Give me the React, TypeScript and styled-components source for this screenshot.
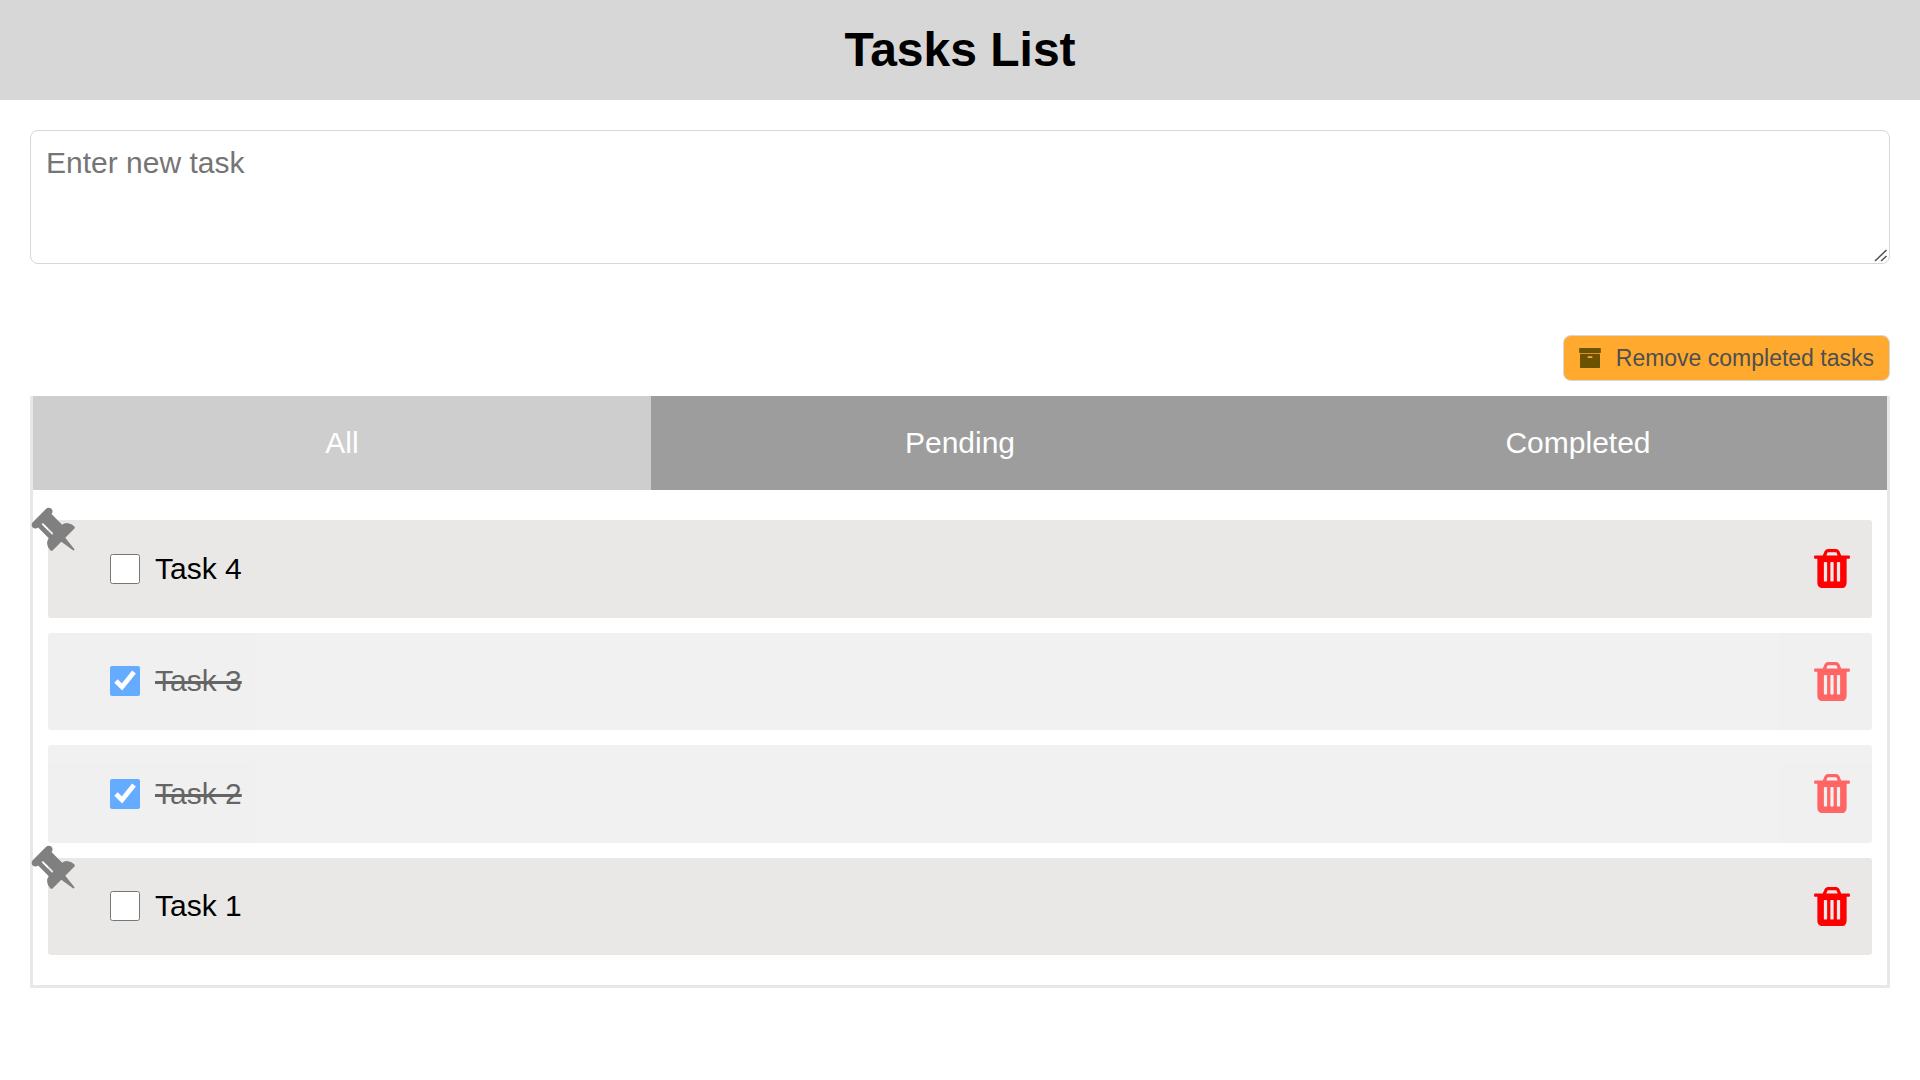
import React, { useState } from "react";
import styled, { createGlobalStyle } from "styled-components";

const GlobalStyle = createGlobalStyle`
  *, *::before, *::after { box-sizing: border-box; }
  body {
    margin: 0;
    background: #fff;
    color: #000;
    font-family: Arial, "Liberation Sans", sans-serif;
    font-size: 30px;
  }
  button, textarea { font-family: inherit; }
`;

const Header = styled.header`
  padding: 20px;
  background: #d7d7d7;
  text-align: center;
`;

const Title = styled.h1`
  margin: 0;
  font-size: 48px;
  line-height: 60px;
`;

const Main = styled.main`
  display: flex;
  flex-direction: column;
  padding: 30px;
`;

const TaskInput = styled.textarea`
  display: block;
  width: 100%;
  padding: 15px;
  border: 1px solid #d7d7d7;
  border-radius: 8px;
  background: #fff;
  font-size: 30px;
  line-height: 34px;
  resize: vertical;

  &::placeholder { color: #757575; }

  &::-webkit-resizer {
    background: url("data:image/svg+xml,%3Csvg xmlns='http://www.w3.org/2000/svg' width='15' height='15'%3E%3Cpath d='M1 13L12.500 2M7 13L12.500 8' stroke='%23505050' stroke-width='1.500' fill='none'/%3E%3C/svg%3E") no-repeat;
  }
`;

const Toolbar = styled.div`
  display: flex;
  justify-content: flex-end;
  margin: 71px 0 15px;
`;

const RemoveButton = styled.button`
  display: flex;
  align-items: center;
  gap: 15px;
  padding: 7px 15px;
  border: 1px solid #d7d7d7;
  border-radius: 8px;
  background: #ffaa2e;
  color: #4f4f4f;
  font-size: 23px;
  line-height: 30px;
  cursor: pointer;

  svg { fill: #6b5200; }
`;

const Panel = styled.section`
  border: 3px solid #e8e8e8;
  border-top: 0;
`;

const Tabs = styled.div`
  display: grid;
  grid-template-columns: repeat(3, 1fr);
`;

const Tab = styled.button<{ $active: boolean }>`
  padding: 30px;
  border: 0;
  background: ${(p) => (p.$active ? "#cecece" : "#9d9d9d")};
  color: #fff;
  font-size: 30px;
  line-height: 34px;
  cursor: pointer;
`;

const TaskList = styled.ul`
  display: flex;
  flex-direction: column;
  gap: 15px;
  margin: 0;
  padding: 30px 15px;
  list-style: none;
`;

const TaskRow = styled.li<{ $done: boolean }>`
  position: relative;
  display: flex;
  align-items: center;
  justify-content: space-between;
  padding: 15px 22px 15px 62px;
  border-radius: 3px;
  background: ${(p) => (p.$done ? "#e7e7e7" : "#e9e8e6")};
  opacity: ${(p) => (p.$done ? 0.6 : 1)};
`;

const TaskLabel = styled.label<{ $done: boolean }>`
  display: flex;
  align-items: center;
  gap: 15px;
  line-height: 34px;
  text-decoration: ${(p) => (p.$done ? "line-through" : "none")};
`;

const Check = styled.input`
  width: 30px;
  height: 30px;
  margin: 0;
`;

const DeleteButton = styled.button`
  display: flex;
  align-items: center;
  height: 1.5em;
  padding: 0;
  border: 0;
  background: none;
  font-size: 45px;
  cursor: pointer;

  svg { fill: #f00; }
`;

const Pin = styled.svg`
  position: absolute;
  top: -15px;
  left: -19px;
  width: 53px;
  height: 53px;
  fill: #808080;
  transform: rotate(-45deg);
`;

const TrashIcon = () => (
  <svg width="36" height="39" viewBox="192 128 1408 1536" aria-hidden="true">
    <path d="M704 1376v-704q0-14-9-23t-23-9h-64q-14 0-23 9t-9 23v704q0 14 9 23t23 9h64q14 0 23-9t9-23zm256 0v-704q0-14-9-23t-23-9h-64q-14 0-23 9t-9 23v704q0 14 9 23t23 9h64q14 0 23-9t9-23zm256 0v-704q0-14-9-23t-23-9h-64q-14 0-23 9t-9 23v704q0 14 9 23t23 9h64q14 0 23-9t9-23zm-544-992h448l-48-117q-7-9-17-11h-317q-10 2-17 11zm928 32v64q0 14-9 23t-23 9h-96v948q0 83-47 143.500t-113 60.500h-832q-66 0-113-58.500t-47-141.500v-952h-96q-14 0-23-9t-9-23v-64q0-14 9-23t23-9h309l70-167q15-37 54-63t79-26h320q40 0 79 26t54 63l70 167h309q14 0 23 9t9 23z" />
  </svg>
);

const ArchiveIcon = () => (
  <svg width="22" height="20" viewBox="64 128 1664 1536" aria-hidden="true">
    <path d="M1088 832q0-26-19-45t-45-19h-256q-26 0-45 19t-19 45 19 45 45 19h256q26 0 45-19t19-45zm576-192v960q0 26-19 45t-45 19h-1408q-26 0-45-19t-19-45v-960q0-26 19-45t45-19h1408q26 0 45 19t19 45zm64-448v256q0 26-19 45t-45 19h-1536q-26 0-45-19t-19-45v-256q0-26 19-45t45-19h1536q26 0 45 19t19 45z" />
  </svg>
);

const PinIcon = () => (
  <Pin viewBox="0 0 1792 1792" aria-hidden="true">
    <path d="M800 864v-448q0-14-9-23t-23-9-23 9-9 23v448q0 14 9 23t23 9 23-9 9-23zm672 352q0 26-19 45t-45 19h-429l-51 483q-2 12-10.500 20.500t-20.500 8.500h-1q-27 0-32-27l-76-485h-404q-26 0-45-19t-19-45q0-123 78.500-221.500t177.500-98.500v-512q-52 0-90-38t-38-90 38-90 90-38h640q52 0 90 38t38 90-38 90-90 38v512q99 0 177.500 98.500t78.500 221.500z" />
  </Pin>
);

type Filter = "All" | "Pending" | "Completed";
interface Task {
  id: number;
  text: string;
  done: boolean;
}

const FILTERS: Filter[] = ["All", "Pending", "Completed"];
const INITIAL: Task[] = [
  { id: 4, text: "Task 4", done: false },
  { id: 3, text: "Task 3", done: true },
  { id: 2, text: "Task 2", done: true },
  { id: 1, text: "Task 1", done: false },
];

export default function App() {
  const [tasks, setTasks] = useState(INITIAL);
  const [filter, setFilter] = useState<Filter>("All");

  const visible = tasks.filter(
    (t) => filter === "All" || t.done === (filter === "Completed")
  );

  const toggle = (id: number) =>
    setTasks(tasks.map((t) => (t.id === id ? { ...t, done: !t.done } : t)));

  const addTask = (e: React.KeyboardEvent<HTMLTextAreaElement>) => {
    const text = e.currentTarget.value.trim();
    if (e.key !== "Enter" || !text) return;
    e.preventDefault();
    setTasks([{ id: Date.now(), text, done: false }, ...tasks]);
    e.currentTarget.value = "";
  };

  return (
    <>
      <GlobalStyle />
      <Header>
        <Title>Tasks List</Title>
      </Header>
      <Main>
        <TaskInput
          rows={3}
          placeholder="Enter new task"
          aria-label="Enter new task"
          onKeyDown={addTask}
        />
        <Toolbar>
          <RemoveButton
            type="button"
            onClick={() => setTasks(tasks.filter((t) => !t.done))}
          >
            <ArchiveIcon />
            Remove completed tasks
          </RemoveButton>
        </Toolbar>
        <Panel>
          <Tabs>
            {FILTERS.map((f) => (
              <Tab
                key={f}
                type="button"
                $active={f === filter}
                aria-pressed={f === filter}
                onClick={() => setFilter(f)}
              >
                {f}
              </Tab>
            ))}
          </Tabs>
          <TaskList>
            {visible.map((t) => (
              <TaskRow key={t.id} $done={t.done}>
                {!t.done && <PinIcon />}
                <TaskLabel $done={t.done}>
                  <Check
                    type="checkbox"
                    checked={t.done}
                    onChange={() => toggle(t.id)}
                  />
                  {t.text}
                </TaskLabel>
                <DeleteButton
                  type="button"
                  aria-label={`Delete ${t.text}`}
                  onClick={() => setTasks(tasks.filter((o) => o.id !== t.id))}
                >
                  <TrashIcon />
                </DeleteButton>
              </TaskRow>
            ))}
          </TaskList>
        </Panel>
      </Main>
    </>
  );
}
